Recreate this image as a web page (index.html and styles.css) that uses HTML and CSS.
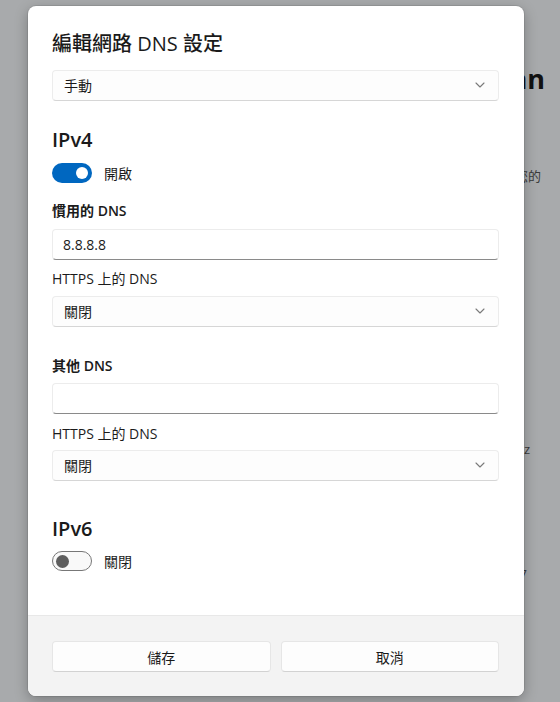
FILE: index.html
```html
<!DOCTYPE html>
<html lang="zh-Hant">
<head>
<meta charset="utf-8">
<title>編輯網路 DNS 設定</title>
<link rel="stylesheet" href="styles.css">
</head>
<body>
<div class="backdrop">
  <div class="bg-title">網路內容 Jonathan</div>
  <div class="bg-line bg-l1">連線時，保護您的</div>
  <div class="bg-line bg-l2">網路頻帶 5 GHz</div>
  <div class="bg-line bg-l3">Realtek 8167</div>
</div>

<div class="dialog">
  <div class="dialog-body">
    <h1 class="dialog-title">編輯網路 DNS 設定</h1>
    <div class="select mt-12">
      <span>手動</span>
      <svg class="chev" width="10" height="6" viewBox="0 0 10 6"><polyline points="1,1 5,5 9,1" fill="none" stroke="#7a7a7a" stroke-width="1.1" stroke-linecap="round" stroke-linejoin="round"/></svg>
    </div>

    <h2 class="section-title mt-25">IPv4</h2>
    <div class="toggle-row mt-4">
      <span class="toggle on"><span class="knob"></span></span>
      <span class="toggle-label">開啟</span>
    </div>

    <div class="field-label strong mt-13">慣用的 DNS</div>
    <div class="input mt-8">8.8.8.8</div>
    <div class="field-label mt-9">HTTPS 上的 DNS</div>
    <div class="select mt-7">
      <span>關閉</span>
      <svg class="chev" width="10" height="6" viewBox="0 0 10 6"><polyline points="1,1 5,5 9,1" fill="none" stroke="#7a7a7a" stroke-width="1.1" stroke-linecap="round" stroke-linejoin="round"/></svg>
    </div>

    <div class="field-label strong mt-29">其他 DNS</div>
    <div class="input mt-7"></div>
    <div class="field-label mt-10">HTTPS 上的 DNS</div>
    <div class="select mt-6">
      <span>關閉</span>
      <svg class="chev" width="10" height="6" viewBox="0 0 10 6"><polyline points="1,1 5,5 9,1" fill="none" stroke="#7a7a7a" stroke-width="1.1" stroke-linecap="round" stroke-linejoin="round"/></svg>
    </div>

    <h2 class="section-title mt-34">IPv6</h2>
    <div class="toggle-row mt-3">
      <span class="toggle off"><span class="knob"></span></span>
      <span class="toggle-label">關閉</span>
    </div>
  </div>
  <div class="dialog-footer">
    <button class="btn">儲存</button>
    <button class="btn">取消</button>
  </div>
</div>
</body>
</html>
```

FILE: styles.css
```css
* { box-sizing: border-box; }

html, body {
  margin: 0;
  padding: 0;
}

body {
  width: 560px;
  height: 702px;
  overflow: hidden;
  background: #a8aaac;
  font-family: "Open Sans", "Noto Sans CJK TC", sans-serif;
  color: #1b1b1b;
  position: relative;
}

/* underlying settings page (dimmed) */
.backdrop {
  display: flex;
  flex-direction: column;
  align-items: flex-end;
  white-space: nowrap;
  color: #1e1e1e;
}

.bg-title {
  margin-top: 62px;
  padding-right: 15px;
  font-size: 27px;
  font-weight: 700;
  line-height: 34px;
  color: #111;
}

.bg-line {
  font-size: 13px;
  line-height: 18px;
  color: #3a3a3a;
}

.bg-l1 { margin-top: 71px; padding-right: 19px; }
.bg-l2 { margin-top: 255px; padding-right: 30px; }
.bg-l3 { margin-top: 107px; padding-right: 33px; }

/* dialog overlay */
.dialog {
  position: absolute;
  left: 28px;
  top: 6px;
  width: 496px;
  height: 690px;
  background: #ffffff;
  border-radius: 8px;
  overflow: hidden;
  display: flex;
  flex-direction: column;
  box-shadow: 0 0 0 1px rgba(0,0,0,0.08), 0 4px 14px rgba(0,0,0,0.28);
}

.dialog-body {
  flex: 1;
  padding: 24px 25px 0 24px;
  display: flex;
  flex-direction: column;
}

.dialog-title {
  margin: 0;
  font-size: 20px;
  line-height: 28px;
  font-weight: 500;
  color: #1a1a1a;
}

.section-title {
  margin: 0;
  font-size: 20px;
  line-height: 28px;
  font-weight: 600;
  color: #1a1a1a;
}

.select {
  height: 31px;
  border: 1px solid #ececec;
  border-bottom-color: #d6d6d6;
  border-radius: 4px;
  background: #fdfdfd;
  display: flex;
  align-items: center;
  justify-content: space-between;
  padding: 0 13px 1px 11px;
  font-size: 14px;
  color: #1a1a1a;
}

.chev { display: block; }

.input {
  height: 31px;
  border: 1px solid #ececec;
  border-bottom: 1px solid #8a8a8a;
  border-radius: 4px;
  background: #ffffff;
  display: flex;
  align-items: center;
  padding: 0 10px;
  font-size: 14px;
  color: #1a1a1a;
}

.field-label {
  font-size: 14px;
  line-height: 20px;
  color: #1b1b1b;
}

.field-label.strong { font-weight: 600; }

.toggle-row {
  height: 30px;
  display: flex;
  align-items: center;
  gap: 12px;
}

.toggle {
  width: 40px;
  height: 20px;
  border-radius: 10px;
  display: flex;
  align-items: center;
  padding: 0 4px;
}

.toggle .knob {
  width: 12px;
  height: 12px;
  border-radius: 50%;
}

.toggle.on {
  background: #0067c0;
  justify-content: flex-end;
}

.toggle.on .knob { background: #ffffff; }

.toggle.off {
  background: #f9f9f9;
  border: 1px solid #777777;
  justify-content: flex-start;
  padding: 0 3px;
}

.toggle.off .knob {
  width: 13px;
  height: 13px;
  background: #5e5e5e;
}

.toggle-label {
  font-size: 14px;
  color: #1b1b1b;
}

.dialog-footer {
  height: 81px;
  background: #f3f3f3;
  border-top: 1px solid #e8e8e8;
  padding: 25px 25px 0 24px;
  display: grid;
  grid-template-columns: 1fr 1fr;
  column-gap: 10px;
  align-items: start;
}

.btn {
  height: 31px;
  border: 1px solid #e6e6e6;
  border-bottom-color: #d2d2d2;
  border-radius: 4px;
  background: #fdfdfd;
  font-family: "Open Sans", "Noto Sans CJK TC", sans-serif;
  font-size: 14px;
  color: #1a1a1a;
  padding: 0;
}

.mt-3 { margin-top: 3px; }
.mt-4 { margin-top: 4px; }
.mt-6 { margin-top: 6px; }
.mt-7 { margin-top: 7px; }
.mt-8 { margin-top: 8px; }
.mt-9 { margin-top: 9px; }
.mt-10 { margin-top: 10px; }
.mt-12 { margin-top: 12px; }
.mt-13 { margin-top: 13px; }
.mt-25 { margin-top: 25px; }
.mt-29 { margin-top: 29px; }
.mt-34 { margin-top: 34px; }
```
